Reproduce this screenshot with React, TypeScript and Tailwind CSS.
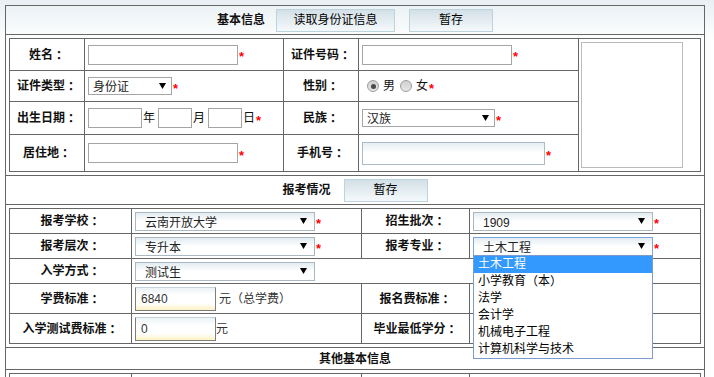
import React from 'react'

// full-width punctuation centred in its box, like the reference font
function P({ c }: { c: string }) {
  return <span className="font-['Noto_Sans_CJK_TC',sans-serif]">{c}</span>
}

function Star() {
  return <span className="ml-px translate-y-[2px] text-[13px] leading-none font-bold text-[#f00]">*</span>
}

function Arrow() {
  return (
    <svg width="7" height="6" viewBox="0 0 7 6" className="shrink-0">
      <path d="M0 0h7L3.5 6z" fill="#000" />
    </svg>
  )
}

function Label({ text }: { text: string }) {
  return (
    <div className="flex items-center justify-center bg-white text-[12px] font-bold text-[#111]">
      {text}
      <P c="：" />
    </div>
  )
}

// plain white select, used in the first table
function PlainSelect({ value, width }: { value: string; width: string }) {
  return (
    <div
      className={`flex h-[18px] items-center justify-between border border-[#a5a5a5] bg-white pr-[5px] pl-[4px] text-[12px] text-[#222] ${width}`}
    >
      <span className="pt-[2px]">{value}</span>
      <Arrow />
    </div>
  )
}

// gradient select, used in the second table
function SoftSelect({ value, width, focused }: { value: string; width: string; focused?: boolean }) {
  return (
    <div
      className={`flex h-[19px] items-center justify-between border bg-linear-to-b from-[#e3ecf1] via-white to-white pr-[7px] pl-[9px] text-[12px] text-[#222] ${width} ${
        focused ? 'border-[#7aa6dc]' : 'border-[#a9b8c1]'
      }`}
    >
      <span className="pt-[3px]">{value}</span>
      <Arrow />
    </div>
  )
}

function FeeInput({ value }: { value: string }) {
  return (
    <div className="flex h-[24px] w-[81px] items-center border border-[#7d7d7d] border-t-[#c4d2d9] bg-[linear-gradient(to_bottom,#edf3f6,#ffffff_35%,#ffffff_70%,#fcf2c4)] pl-[5px] text-[12px] text-[#333]">
      {value}
    </div>
  )
}

function Radio({ checked }: { checked?: boolean }) {
  return (
    <span className="flex h-[12px] w-[12px] items-center justify-center rounded-full border border-[#9c9c9c] bg-linear-to-b from-[#cfcfcf] to-[#e8e8e8]">
      {checked && <span className="h-[5px] w-[5px] rounded-full bg-[#4a4a4a]" />}
    </span>
  )
}

const majors = ['土木工程', '小学教育（本）', '法学', '会计学', '机械电子工程', '计算机科学与技术']

export default function App() {
  return (
    <div className="min-h-screen bg-[linear-gradient(to_bottom,#e8f0f3,#ffffff_42px)] p-[5px] font-['Liberation_Sans','Noto_Sans_CJK_SC',sans-serif] text-[12px] text-[#111]">
      <div className="w-[700px] border border-[#666]">
        {/* 基本信息 */}
        <div className="flex h-[29px] items-center justify-center border-b border-[#666]">
          <span className="font-bold">基本信息</span>
          <button className="ml-[11px] h-[23px] w-[119px] border border-[#bcd4de] bg-linear-to-b from-[#d3e0e7] to-[#f5f9fb] text-[12px] text-black">
            读取身份证信息
          </button>
          <button className="ml-[14px] h-[23px] w-[84px] border border-[#bcd4de] bg-linear-to-b from-[#d3e0e7] to-[#f5f9fb] text-[12px] text-black">
            暂存
          </button>
        </div>

        <div className="border-b border-[#666] p-[3px]">
          <div className="grid w-[692px] grid-cols-[74px_198px_74px_219px_121px] grid-rows-[31px_30px_32px_36px] gap-px border border-[#666] bg-[#666]">
            <Label text="姓名" />
            <div className="flex items-center bg-white pl-[3px]">
              <div className="h-[20px] w-[150px] border border-[#a5a5a5] bg-white" />
              <Star />
            </div>
            <Label text="证件号码" />
            <div className="flex items-center bg-white pl-[3px]">
              <div className="h-[20px] w-[150px] border border-[#a5a5a5] bg-white" />
              <Star />
            </div>
            <div className="row-span-4 bg-white pt-[3px] pl-[2px]">
              <div className="h-[126px] w-[102px] border border-[#bbb]" />
            </div>

            <Label text="证件类型" />
            <div className="flex items-center bg-white pl-[3px]">
              <PlainSelect value="身份证" width="w-[84px]" />
              <Star />
            </div>
            <Label text="性别" />
            <div className="flex items-center bg-white pl-[8px]">
              <Radio checked />
              <span className="ml-[4px]">男</span>
              <span className="ml-[5px]">
                <Radio />
              </span>
              <span className="ml-[4px]">女</span>
              <Star />
            </div>

            <Label text="出生日期" />
            <div className="flex items-center bg-white pl-[3px]">
              <div className="h-[20px] w-[54px] border border-[#a5a5a5] bg-white" />
              <span className="ml-px">年</span>
              <div className="ml-[3px] h-[20px] w-[34px] border border-[#a5a5a5] bg-white" />
              <span className="ml-px">月</span>
              <div className="ml-[3px] h-[20px] w-[34px] border border-[#a5a5a5] bg-white" />
              <span className="ml-px">日</span>
              <Star />
            </div>
            <Label text="民族" />
            <div className="flex items-center bg-white pl-[3px]">
              <PlainSelect value="汉族" width="w-[133px]" />
              <Star />
            </div>

            <Label text="居住地" />
            <div className="flex items-center bg-white pl-[3px]">
              <div className="h-[20px] w-[150px] border border-[#a5a5a5] bg-white" />
              <Star />
            </div>
            <Label text="手机号" />
            <div className="flex items-center bg-white pl-[3px]">
              <div className="h-[23px] w-[183px] border border-[#abbac3] bg-linear-to-b from-[#e5eef3] via-white to-white" />
              <Star />
            </div>
          </div>
        </div>

        {/* 报考情况 */}
        <div className="flex h-[29px] items-center justify-center border-b border-[#666]">
          <span className="font-bold">报考情况</span>
          <button className="ml-[13px] h-[23px] w-[84px] border border-[#bcd4de] bg-linear-to-b from-[#d3e0e7] to-[#f5f9fb] text-[12px] text-black">
            暂存
          </button>
        </div>

        <div className="border-b border-[#666] p-[3px]">
          <div className="grid w-[692px] grid-cols-[121px_229px_107px_230px] grid-rows-[24px_24px_24px_29px_29px] gap-px border border-[#666] bg-[#666]">
            <Label text="报考学校" />
            <div className="flex items-center bg-white pl-[3px]">
              <SoftSelect value="云南开放大学" width="w-[180px]" />
              <Star />
            </div>
            <Label text="招生批次" />
            <div className="flex items-center bg-white pl-[3px]">
              <SoftSelect value="1909" width="w-[180px]" />
              <Star />
            </div>

            <Label text="报考层次" />
            <div className="flex items-center bg-white pl-[3px]">
              <SoftSelect value="专升本" width="w-[180px]" />
              <Star />
            </div>
            <Label text="报考专业" />
            <div className="flex items-center bg-white pl-[3px]">
              <div className="relative">
                <SoftSelect value="土木工程" width="w-[180px]" focused />
                <div className="absolute top-[18px] left-0 z-10 w-[180px] border border-[#7b9ccb] bg-white">
                  {majors.map((m, i) => (
                    <div
                      key={m}
                      className={`flex h-[17px] items-center pl-[4px] text-[12px] ${
                        i === 0 ? 'bg-[#3399ff] text-white' : 'text-black'
                      }`}
                    >
                      {m === '小学教育（本）' ? (
                        <>
                          小学教育
                          <P c="（" />本<P c="）" />
                        </>
                      ) : (
                        m
                      )}
                    </div>
                  ))}
                </div>
              </div>
              <Star />
            </div>

            <Label text="入学方式" />
            <div className="col-span-3 flex items-center bg-white pl-[3px]">
              <SoftSelect value="测试生" width="w-[180px]" />
            </div>

            <Label text="学费标准" />
            <div className="flex items-center bg-white pl-[3px]">
              <FeeInput value="6840" />
              <span className="ml-[3px] text-[#333]">
                元<P c="（" />总学费<P c="）" />
              </span>
            </div>
            <Label text="报名费标准" />
            <div className="flex items-center bg-white pl-[3px]">
              <FeeInput value="" />
            </div>

            <Label text="入学测试费标准" />
            <div className="flex items-center bg-white pl-[3px]">
              <FeeInput value="0" />
              <span className="text-[#333]">元</span>
            </div>
            <Label text="毕业最低学分" />
            <div className="flex items-center bg-white pl-[3px]">
              <FeeInput value="" />
            </div>
          </div>
        </div>

        {/* 其他基本信息 */}
        <div className="flex h-[22px] items-center justify-center border-b border-[#666]">
          <span className="font-bold">其他基本信息</span>
        </div>
        <div className="p-[3px]">
          <div className="grid w-[692px] grid-cols-[121px_229px_107px_230px] grid-rows-[28px] gap-px border border-[#666] bg-[#666]">
            <div className="bg-white" />
            <div className="bg-white" />
            <div className="bg-white" />
            <div className="bg-white" />
          </div>
        </div>
      </div>
    </div>
  )
}
